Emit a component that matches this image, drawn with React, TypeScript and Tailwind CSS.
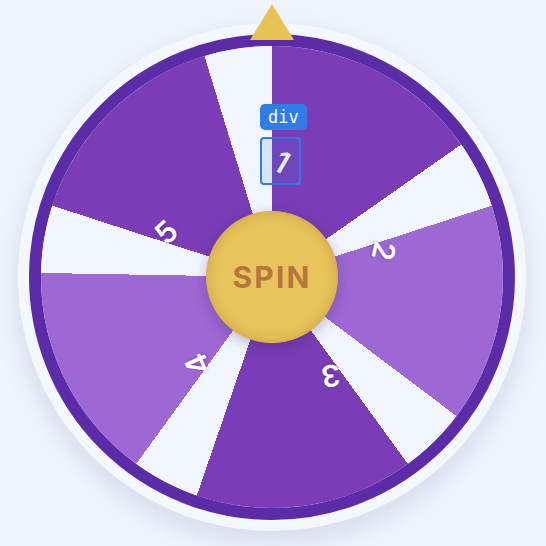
import React from 'react';

const segments = [1, 2, 3, 4, 5];

// label position on the disc (disc is 462px, centre 231/231)
function labelPos(i: number) {
  const deg = i * 72 + 5;
  const rad = (deg * Math.PI) / 180;
  const r = 115;
  return {
    left: 231 + r * Math.sin(rad),
    top: 231 - r * Math.cos(rad),
    rot: i * 72 + 30,
  };
}

export default function App() {
  return (
    <div className="relative w-[546px] h-[546px] overflow-hidden bg-[#eff4fc] font-['Inter','Noto_Sans',sans-serif]">
      {/* Wheel */}
      <div className="flex pt-[23px] pl-[18px]">
        <div className="flex items-center justify-center w-[508px] h-[508px] rounded-full bg-[#f3f7fe] shadow-[0_10px_28px_rgba(40,60,110,0.14)]">
          <div className="flex items-center justify-center w-[486px] h-[486px] rounded-full border-[12px] border-[#5c2ba7] bg-[#f1f6fe]">
            <div className="relative flex items-center justify-center w-[462px] h-[462px] rounded-full bg-[conic-gradient(#7a3db7_0deg_55deg,#f1f6fe_55deg_72deg,#9d68d4_72deg_127deg,#f1f6fe_127deg_144deg,#7a3db7_144deg_199deg,#f1f6fe_199deg_216deg,#9d68d4_216deg_271deg,#f1f6fe_271deg_288deg,#7a3db7_288deg_343deg,#f1f6fe_343deg_360deg)]">
              {segments.map((n, i) => {
                const p = labelPos(i);
                return (
                  <div
                    key={n}
                    className="absolute text-[30px] leading-none font-semibold text-white [text-shadow:0_1px_3px_rgba(40,10,80,0.35)]"
                    style={{ left: p.left, top: p.top, transform: `translate(-50%, -50%) rotate(${p.rot}deg)` }}
                  >
                    {n}
                  </div>
                );
              })}

              {/* Centre button */}
              <button className="w-[132px] h-[132px] rounded-full bg-[#e8c55c] flex items-center justify-center shadow-[inset_0_0_14px_rgba(175,115,40,0.5),0_4px_14px_rgba(50,20,90,0.28)]">
                <span className="text-[30px] font-bold tracking-[0.07em] text-[#b5773d] leading-none">SPIN</span>
              </button>
            </div>
          </div>
        </div>
      </div>

      {/* Pointer */}
      <div className="absolute left-[250px] top-[4px] w-[44px] h-[36px] bg-[#e6c352] [clip-path:polygon(50%_0,100%_100%,0_100%)]" />

      {/* Inspector overlay */}
      <div className="absolute left-[260px] top-[104px] h-[26px] px-[8px] rounded-[5px] bg-[#2f7de6] flex items-center text-white text-[17px] leading-none font-['DejaVu_Sans_Mono',monospace]">
        div
      </div>
      <div className="absolute left-[260px] top-[137px] w-[41px] h-[48px] rounded-[4px] border-2 border-[#3179e4] bg-[#3b82f6]/15" />
    </div>
  );
}
